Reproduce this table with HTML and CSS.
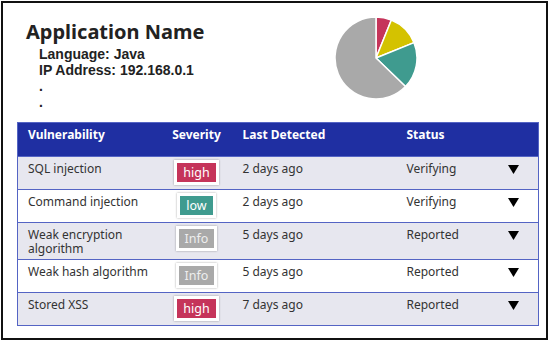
FILE: index.html
```html
<!DOCTYPE html>
<html lang="en">
<head>
  <meta charset="UTF-8">
  <title>Application Name</title>
  <link rel="stylesheet" href="styles.css">
</head>
<body>
  <div class="frame">
    <header class="app-head">
      <div class="app-info">
        <h1>Application Name</h1>
        <ul class="meta">
          <li>Language: Java</li>
          <li>IP Address: 192.168.0.1</li>
          <li>.</li>
          <li>.</li>
        </ul>
      </div>
      <!-- severity breakdown -->
      <svg class="pie" width="86" height="86" viewBox="0 0 86 86">
        <path class="s-high" d="M43 43 L43 2 A41 41 0 0 1 58.36 4.98 Z"/>
        <path class="s-med" d="M43 43 L58.36 4.98 A41 41 0 0 1 81.01 27.64 Z"/>
        <path class="s-low" d="M43 43 L81.01 27.64 A41 41 0 0 1 72.49 71.48 Z"/>
        <path class="s-info" d="M43 43 L72.49 71.48 A41 41 0 1 1 43 2 Z"/>
      </svg>
    </header>

    <table class="vulns">
      <colgroup>
        <col class="c-name"><col class="c-sev"><col class="c-date"><col class="c-status"><col class="c-more">
      </colgroup>
      <thead>
        <tr><th>Vulnerability</th><th class="sev">Severity</th><th>Last Detected</th><th>Status</th><th></th></tr>
      </thead>
      <tbody>
        <tr>
          <td>SQL injection</td>
          <td class="sev"><span class="badge high">high</span></td>
          <td>2 days ago</td><td>Verifying</td>
          <td><svg class="caret" width="11" height="9" viewBox="0 0 11 9"><path d="M0 0H11L5.5 9Z"/></svg></td>
        </tr>
        <tr>
          <td>Command injection</td>
          <td class="sev"><span class="badge low">low</span></td>
          <td>2 days ago</td><td>Verifying</td>
          <td><svg class="caret" width="11" height="9" viewBox="0 0 11 9"><path d="M0 0H11L5.5 9Z"/></svg></td>
        </tr>
        <tr>
          <td>Weak encryption algorithm</td>
          <td class="sev"><span class="badge info">Info</span></td>
          <td>5 days ago</td><td>Reported</td>
          <td><svg class="caret" width="11" height="9" viewBox="0 0 11 9"><path d="M0 0H11L5.5 9Z"/></svg></td>
        </tr>
        <tr>
          <td>Weak hash algorithm</td>
          <td class="sev"><span class="badge info">Info</span></td>
          <td>5 days ago</td><td>Reported</td>
          <td><svg class="caret" width="11" height="9" viewBox="0 0 11 9"><path d="M0 0H11L5.5 9Z"/></svg></td>
        </tr>
        <tr>
          <td>Stored XSS</td>
          <td class="sev"><span class="badge high">high</span></td>
          <td>7 days ago</td><td>Reported</td>
          <td><svg class="caret" width="11" height="9" viewBox="0 0 11 9"><path d="M0 0H11L5.5 9Z"/></svg></td>
        </tr>
      </tbody>
    </table>
  </div>
</body>
</html>
```

FILE: styles.css
```css
:root{
  --blue:#1f2fa2;
  --line:#5464c4;
  --stripe:#e7e7ef;
  --high:#c5345a;
  --med:#d4c200;
  --low:#3f9b8f;
  --info:#a9a9a9;
}
*{box-sizing:border-box;margin:0;padding:0;}
body{font-family:'Noto Sans',sans-serif;color:#333;background:#fff;}

.frame{margin:1px;width:547px;height:339px;border:2px solid #111;}

/* ------- HEADER ------- */
.app-head{display:flex;height:119px;}
.app-info{width:330px;padding:17px 0 0 23px;}
h1{font-size:20px;line-height:24px;font-weight:700;color:#222;}
.meta{list-style:none;margin-top:2px;padding-left:13px;font-family:'Liberation Sans',sans-serif;font-size:14px;line-height:16px;font-weight:700;color:#222;}
.pie{margin-top:12px;}
.pie path{stroke:#fff;stroke-width:1.5;stroke-linejoin:round;}
.s-high{fill:var(--high);}
.s-med{fill:var(--med);}
.s-low{fill:var(--low);}
.s-info{fill:var(--info);}

/* ------- TABLE ------- */
.vulns{margin-left:14px;width:521px;table-layout:fixed;border-collapse:collapse;border:1px solid var(--line);font-size:12px;line-height:14px;}
.c-name{width:143px;}
.c-sev{width:72px;}
.c-date{width:164px;}
.c-status{width:96px;}
.c-more{width:46px;}
th{background:var(--blue);color:#fff;text-align:left;font-weight:700;padding:5px 10px 14px;}
td{padding:5px 10px 3px;vertical-align:top;border-top:1px solid var(--line);}
tbody tr:nth-child(odd){background:var(--stripe);}
.sev{text-align:center;padding-left:0;padding-right:0;}
td.sev{padding-top:3px;padding-bottom:4px;}
.badge{display:inline-block;vertical-align:top;padding:1px 6px;font-size:12.5px;line-height:17px;border:3px solid #fff;box-shadow:0 0 2px rgba(0,0,0,.35);color:#fff;}
.badge.high{background:var(--high);}
.badge.low{background:var(--low);}
.badge.info{background:var(--info);color:#eee;}
.caret{display:block;margin:3px 0 0 5px;fill:#000;}
```
